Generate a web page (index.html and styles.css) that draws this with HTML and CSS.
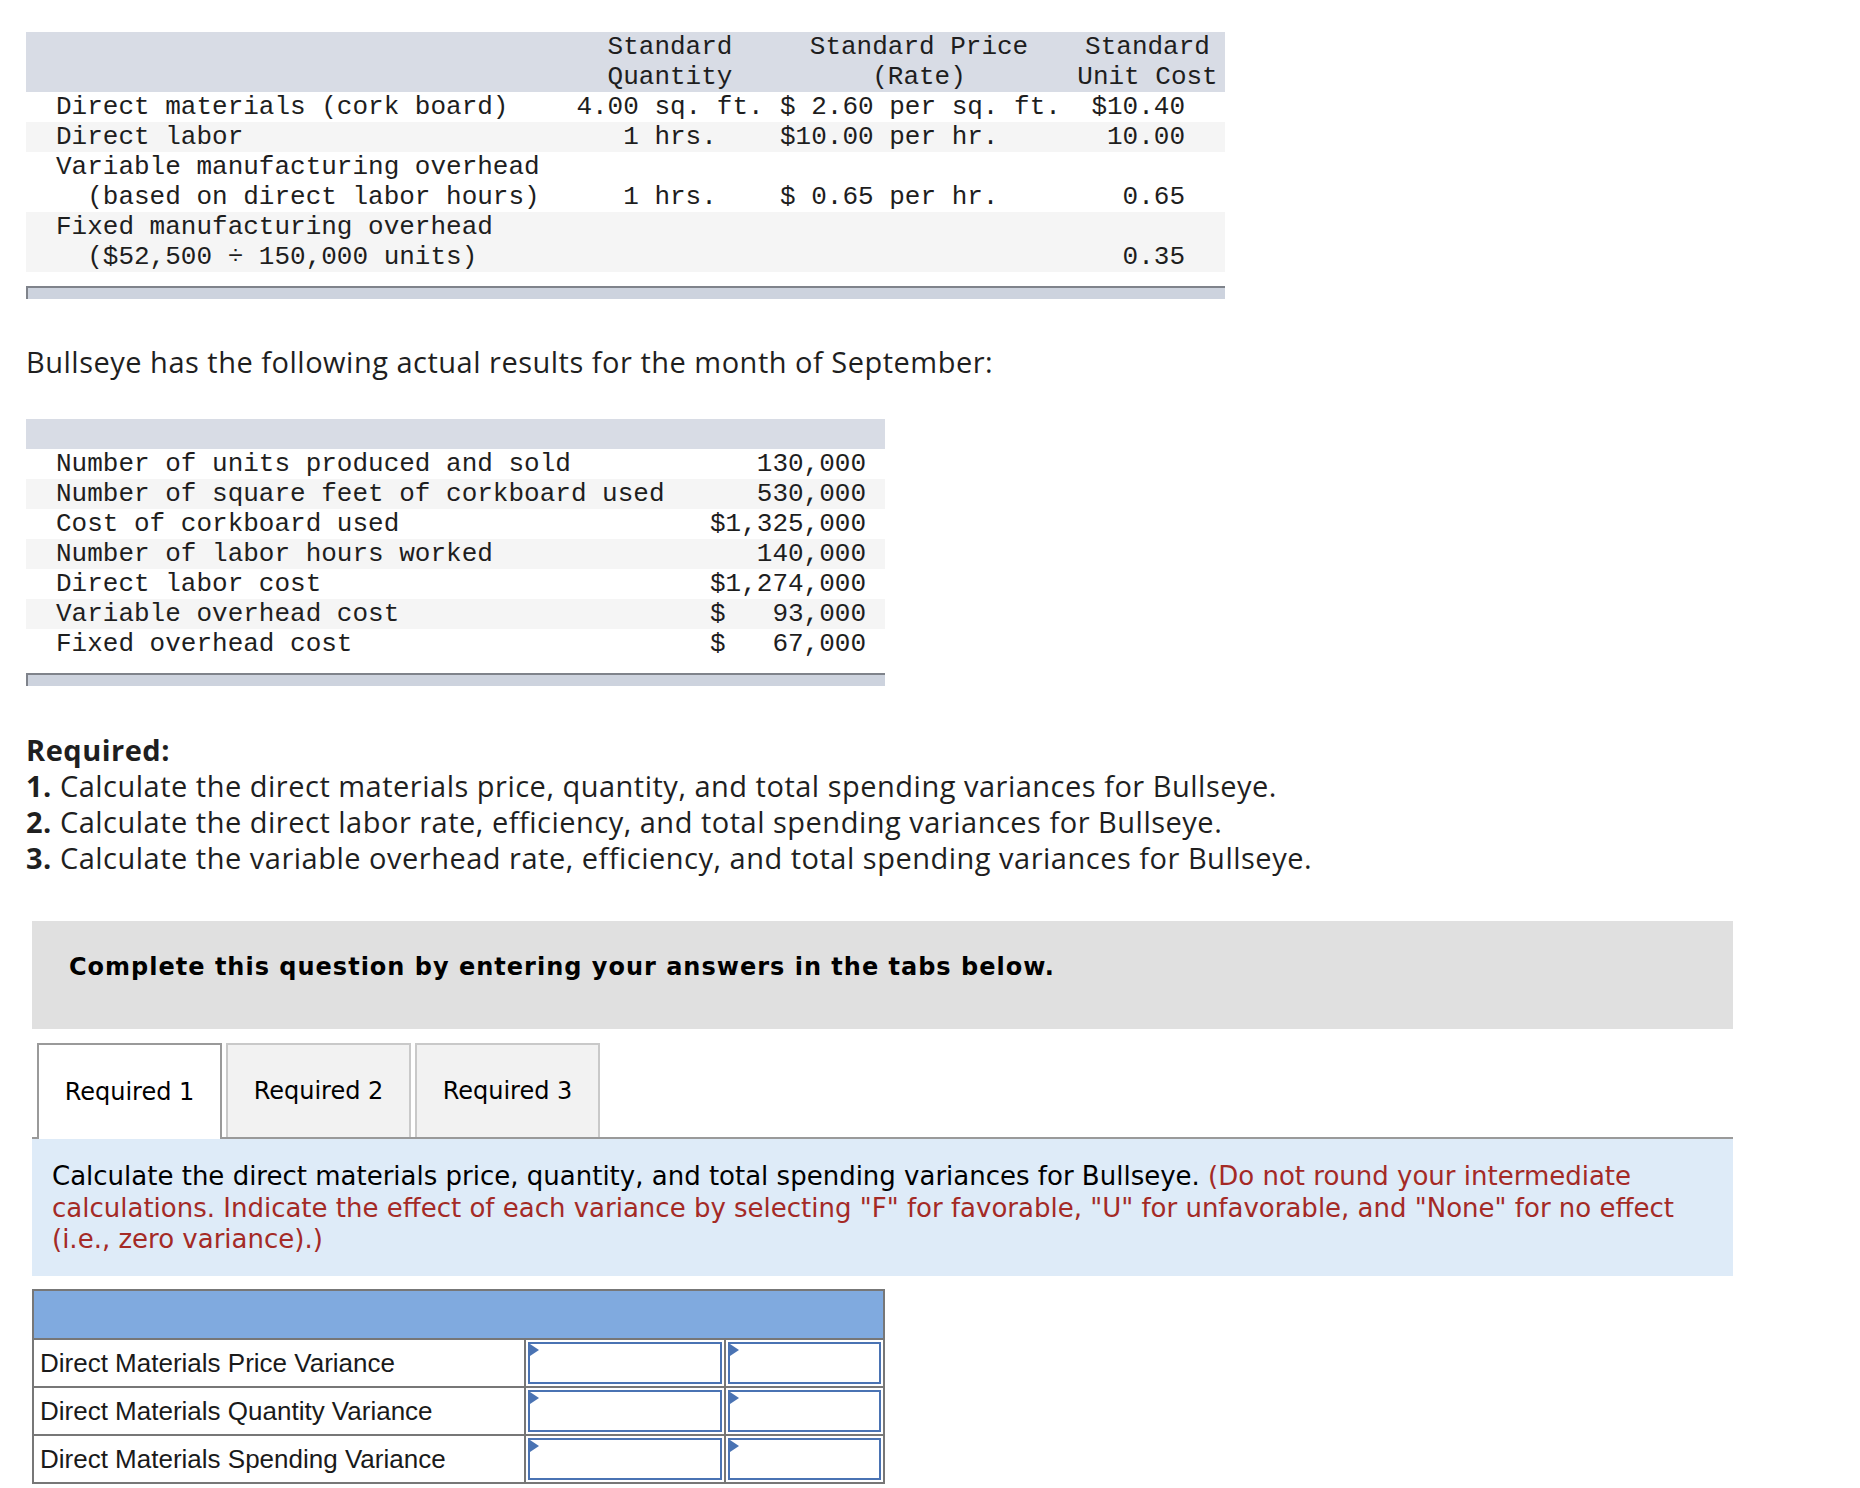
FILE: index.html
```html
<!DOCTYPE html>
<html>
<head>
<meta charset="utf-8">
<link rel="stylesheet" href="styles.css">
</head>
<body>
<div class="page">
  <table class="std">
    <colgroup><col class="w1"><col class="w2"><col class="w3"><col class="w4"></colgroup>
    <thead>
      <tr class="hdr">
        <th></th>
        <th class="cen">Standard<br>Quantity</th>
        <th class="cen h3">Standard Price<br>(Rate)</th>
        <th class="cen">Standard<br>Unit Cost</th>
      </tr>
    </thead>
    <tbody>
      <tr>
        <td class="lbl">Direct materials (cork board)</td>
        <td class="cen">4.00 sq. ft.</td>
        <td class="prc">$ 2.60 per sq. ft.</td>
        <td class="cost">$10.40</td>
      </tr>
      <tr class="alt">
        <td class="lbl">Direct labor</td>
        <td class="cen">1 hrs.</td>
        <td class="prc">$10.00 per hr.</td>
        <td class="cost">10.00</td>
      </tr>
      <tr>
        <td class="lbl">Variable manufacturing overhead<br><span class="ind">(based on direct labor hours)</span></td>
        <td class="cen bot">1 hrs.</td>
        <td class="prc bot">$ 0.65 per hr.</td>
        <td class="cost bot">0.65</td>
      </tr>
      <tr class="alt">
        <td class="lbl">Fixed manufacturing overhead<br><span class="ind">($52,500 ÷ 150,000 units)</span></td>
        <td class="cen bot"></td>
        <td class="prc bot"></td>
        <td class="cost bot">0.35</td>
      </tr>
    </tbody>
  </table>
  <div class="tbar tbar-wide"></div>

  <p class="txt intro">Bullseye has the following actual results for the month of September:</p>

  <table class="act">
    <colgroup><col class="a1"><col class="a2"></colgroup>
    <thead><tr class="hdr"><th></th><th></th></tr></thead>
    <tbody>
      <tr><td class="lbl">Number of units produced and sold</td><td class="val">130,000</td></tr>
      <tr class="alt"><td class="lbl">Number of square feet of corkboard used</td><td class="val">530,000</td></tr>
      <tr><td class="lbl">Cost of corkboard used</td><td class="val">$1,325,000</td></tr>
      <tr class="alt"><td class="lbl">Number of labor hours worked</td><td class="val">140,000</td></tr>
      <tr><td class="lbl">Direct labor cost</td><td class="val">$1,274,000</td></tr>
      <tr class="alt"><td class="lbl">Variable overhead cost</td><td class="val">$   93,000</td></tr>
      <tr><td class="lbl">Fixed overhead cost</td><td class="val">$   67,000</td></tr>
    </tbody>
  </table>
  <div class="tbar tbar-narrow"></div>

  <div class="txt req">
    <div><b>Required:</b></div>
    <div><b>1.</b> Calculate the direct materials price, quantity, and total spending variances for Bullseye.</div>
    <div><b>2.</b> Calculate the direct labor rate, efficiency, and total spending variances for Bullseye.</div>
    <div><b>3.</b> Calculate the variable overhead rate, efficiency, and total spending variances for Bullseye.</div>
  </div>

  <div class="complete">Complete this question by entering your answers in the tabs below.</div>

  <div class="tabs">
    <div class="tab active">Required 1</div>
    <div class="tab">Required 2</div>
    <div class="tab">Required 3</div>
  </div>

  <div class="instr">Calculate the direct materials price, quantity, and total spending variances for Bullseye. <span class="red">(Do not round your intermediate calculations. Indicate the effect of each variance by selecting "F" for favorable, "U" for unfavorable, and "None" for no effect (i.e., zero variance).)</span></div>

  <table class="ans">
    <colgroup><col class="b1"><col class="b2"><col class="b3"></colgroup>
    <thead><tr class="ahdr"><th colspan="3"></th></tr></thead>
    <tbody>
      <tr><td class="albl">Direct Materials Price Variance</td><td class="inp"><div class="box"></div></td><td class="inp"><div class="box"></div></td></tr>
      <tr><td class="albl">Direct Materials Quantity Variance</td><td class="inp"><div class="box"></div></td><td class="inp"><div class="box"></div></td></tr>
      <tr><td class="albl">Direct Materials Spending Variance</td><td class="inp"><div class="box"></div></td><td class="inp"><div class="box"></div></td></tr>
    </tbody>
  </table>
</div>
</body>
</html>
```
FILE: styles.css
```css
html, body {
  margin: 0;
  padding: 0;
  background: #ffffff;
}

.page {
  padding: 32px 0 0 26px;
}

/* ---------- monospace data tables ---------- */
.std, .act {
  border-collapse: collapse;
  border-spacing: 0;
  table-layout: fixed;
  font-family: "Liberation Mono", "DejaVu Sans Mono", monospace;
  font-size: 26px;
  line-height: 30px;
  color: #1e1e1e;
}

.std { width: 1199px; }
.act { width: 859px; }

.std th, .std td, .act th, .act td {
  padding: 0;
  white-space: pre;
  vertical-align: top;
}

.std th {
  font-weight: normal;
}

.w1 { width: 534px; }
.w2 { width: 220px; }
.w3 { width: 290px; }
.w4 { width: 155px; }

.a1 { width: 609px; }
.a2 { width: 250px; }

.hdr {
  background: #d8dce5;
}

.std .h3 {
  padding-right: 12px;
}

.act .hdr th {
  height: 30px;
}

.alt {
  background: #f5f5f5;
}

.lbl {
  padding-left: 30px !important;
}

.ind {
  margin-left: 2ch;
}

.cen { text-align: center; }

.prc {
  text-align: left;
}

.cost {
  text-align: right;
  padding-right: 40px !important;
}

.bot { vertical-align: bottom !important; }

.val {
  text-align: right;
  padding-right: 19px !important;
}

.tbar {
  margin-top: 14px;
  height: 11px;
  border-top: 2px solid #7f838b;
  border-left: 2px solid #7f838b;
  background: #cdd3de;
  box-sizing: content-box;
}

.tbar-wide { width: 1197px; }
.tbar-narrow { width: 857px; }

/* ---------- body text ---------- */
.txt {
  font-family: "Open Sans", Lato, sans-serif;
  font-size: 29px;
  letter-spacing: 0.5px;
  line-height: 36px;
  color: #1f1f1f;
  margin: 0;
}

.intro {
  margin-top: 45px;
  margin-bottom: 39px;
}

.req {
  margin-top: 46px;
}

.req b {
  font-weight: 700;
}

/* ---------- complete box ---------- */
.complete {
  margin: 45px 0 0 6px;
  width: 1701px;
  height: 108px;
  box-sizing: border-box;
  padding: 32px 0 0 37px;
  background: #e0e0e0;
  font-family: "DejaVu Sans", Verdana, sans-serif;
  font-weight: bold;
  font-size: 24px;
  letter-spacing: 1px;
  line-height: 28px;
  color: #000;
}

/* ---------- tabs ---------- */
.tabs {
  margin: 14px 0 0 6px;
  width: 1701px;
  box-sizing: border-box;
  padding-left: 5px;
  display: flex;
  align-items: flex-start;
  gap: 4px;
  border-bottom: 2px solid #9a9a9a;
}

.tab {
  width: 185px;
  height: 94px;
  box-sizing: border-box;
  border: 2px solid #c9c9c9;
  border-bottom: none;
  background: #f2f2f2;
  display: flex;
  align-items: center;
  justify-content: center;
  font-family: "DejaVu Sans", Verdana, sans-serif;
  font-size: 24px;
  color: #000;
}

.tab.active {
  background: #ffffff;
  border-color: #9a9a9a;
  height: 96px;
  margin-bottom: -2px;
}

/* ---------- instructions ---------- */
.instr {
  margin-left: 6px;
  width: 1701px;
  box-sizing: border-box;
  padding: 22px 20px 20px 20px;
  background: #deebf8;
  font-family: "DejaVu Sans", Verdana, sans-serif;
  font-size: 26px;
  line-height: 31.5px;
  color: #000;
}

.red {
  color: #a42a26;
}

/* ---------- answer table ---------- */
.ans {
  margin: 13px 0 0 6px;
  width: 851px;
  border-collapse: collapse;
  table-layout: fixed;
  border: 2px solid #777;
}

.b1 { width: 492px; }
.b2 { width: 200px; }
.b3 { width: 159px; }

.ahdr th {
  height: 47px;
  background: #80aadf;
  border: 2px solid #777;
  padding: 0;
}

.ans td {
  border: 2px solid #777;
  height: 42px;
  padding: 0;
  vertical-align: middle;
}

.albl {
  padding-left: 6px !important;
  font-family: "Liberation Sans", Arial, sans-serif;
  font-size: 26px;
  line-height: 30px;
  color: #1a1a1a;
  white-space: nowrap;
}

.inp {
  padding: 2px !important;
}

.box {
  position: relative;
  height: 38px;
  border: 2px solid #4a73b3;
  background: #fff;
}

.box::before {
  content: "";
  position: absolute;
  left: 0;
  top: 0;
  width: 0;
  height: 0;
  border-top: 6px solid transparent;
  border-bottom: 6px solid transparent;
  border-left: 9px solid #4a73b3;
}
```
